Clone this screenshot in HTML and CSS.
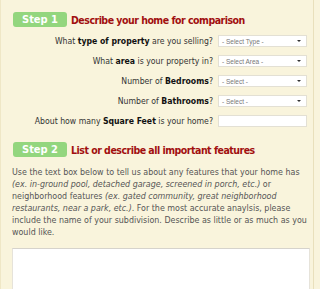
FILE: index.html
```html
<!DOCTYPE html>
<html>
<head>
<meta charset="utf-8">
<link rel="stylesheet" href="styles.css">
</head>
<body>
<div class="panel">
  <div class="step">
    <span class="badge">Step 1</span>
    <h2 class="title">Describe your home for comparison</h2>
  </div>
  <div class="form">
    <label class="lbl">What <b>type of property</b> are you selling?</label>
    <div class="sel"><span>- Select Type -</span><i class="arrow"></i></div>
    <label class="lbl">What <b>area</b> is your property in?</label>
    <div class="sel"><span>- Select Area -</span><i class="arrow"></i></div>
    <label class="lbl">Number of <b>Bedrooms</b>?</label>
    <div class="sel"><span>- Select -</span><i class="arrow"></i></div>
    <label class="lbl">Number of <b>Bathrooms</b>?</label>
    <div class="sel"><span>- Select -</span><i class="arrow"></i></div>
    <label class="lbl">About how many <b>Square Feet</b> is your home?</label>
    <div class="inp"></div>
  </div>
  <div class="step step2">
    <span class="badge">Step 2</span>
    <h2 class="title">List or describe all important features</h2>
  </div>
  <p class="desc">Use the text box below to tell us about any features that your home has <i>(ex. in-ground pool, detached garage, screened in porch, etc.)</i> or neighborhood features <i>(ex. gated community, great neighborhood restaurants, near a park, etc.)</i>. For the most accurate anaylsis, please include the name of your subdivision. Describe as little or as much as you would like.</p>
  <div class="textarea"></div>
</div>
</body>
</html>
```

FILE: styles.css
```css
html, body {
  margin: 0;
  padding: 0;
  background: #f9f4dc;
}
body {
  font-family: "DejaVu Sans Condensed", "DejaVu Sans", sans-serif;
  height: 289px;
  overflow: hidden;
}
.panel {
  box-sizing: border-box;
  width: 314px;
  min-height: 289px;
  border-left: 1px solid #efe7c6;
  border-right: 1px solid #e9e0bc;
  padding: 12px 3px 0 11px;
}
.step {
  display: flex;
  align-items: center;
  gap: 4px;
  margin-left: 1px;
}
.badge {
  display: flex;
  align-items: center;
  justify-content: center;
  width: 54px;
  height: 15px;
  background: #93d67e;
  border-radius: 3px;
  color: #fff;
  font-weight: bold;
  font-size: 11px;
}
.title {
  margin: 0;
  font-size: 10.5px;
  letter-spacing: -0.5px;
  font-weight: bold;
  color: #a10f0f;
}
.form {
  display: grid;
  grid-template-columns: 1fr 89px;
  grid-auto-rows: 20px;
  column-gap: 5px;
  align-items: center;
  padding-right: 3px;
  margin-top: 4px;
}
.lbl {
  text-align: right;
  font-size: 8.65px;
  color: #333;
}
.lbl b {
  color: #111;
}
.sel {
  position: relative;
  box-sizing: border-box;
  height: 12px;
  background: #fff;
  border: 1px solid #e3e0d4;
  font-family: "Liberation Sans", sans-serif;
  font-size: 6.5px;
  color: #777;
  display: flex;
  align-items: center;
  padding-left: 3px;
}
.arrow {
  position: absolute;
  right: 5px;
  top: 4px;
  width: 0;
  height: 0;
  border-left: 2px solid transparent;
  border-right: 2px solid transparent;
  border-top: 2px solid #333;
}
.inp {
  box-sizing: border-box;
  height: 12px;
  background: #fff;
  border: 1px solid #e3e0d4;
}
.step2 {
  margin-top: 11px;
}
.desc {
  margin: 10px 0 0 0;
  font-size: 8.85px;
  line-height: 11.9px;
  color: #555;
}
.textarea {
  margin-top: 10px;
  height: 60px;
  background: #fff;
  border: 1px solid #e6e3da;
  border-top-color: #d6d3cc;
}
```
